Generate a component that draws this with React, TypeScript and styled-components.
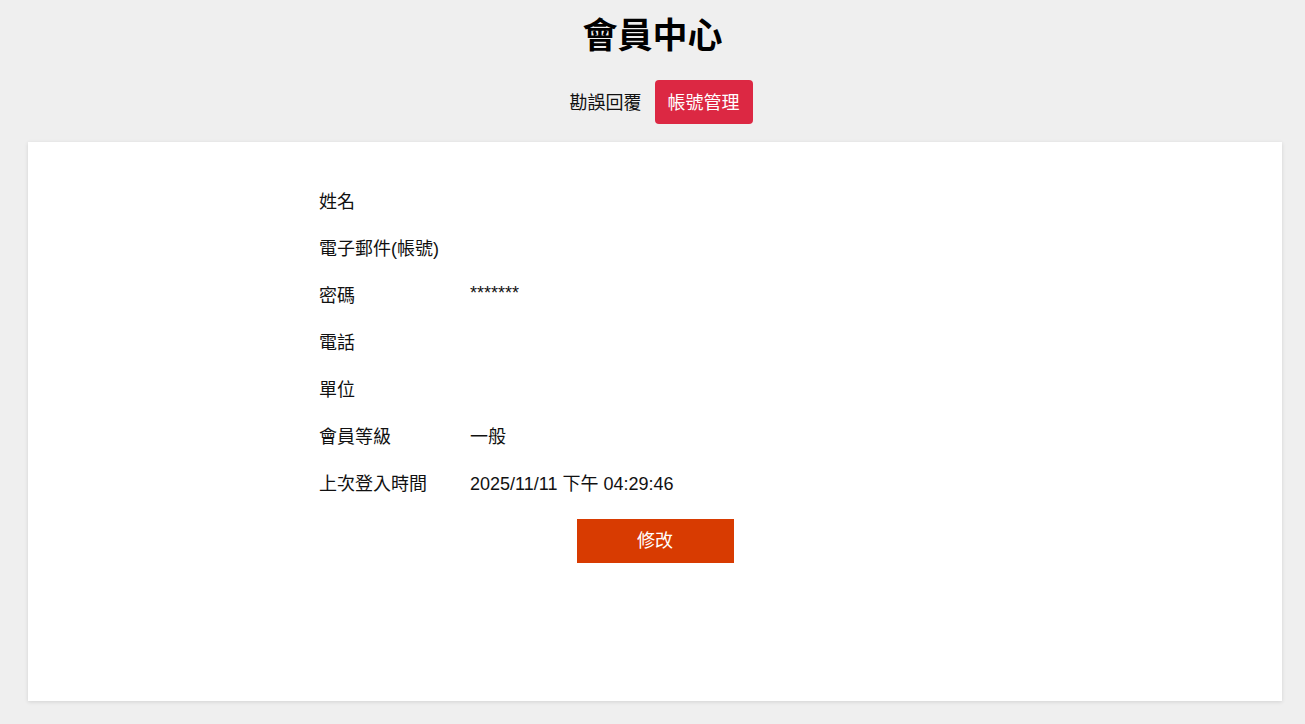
import React from 'react';
import styled, { createGlobalStyle } from 'styled-components';

const GlobalStyle = createGlobalStyle`
  html, body {
    margin: 0;
    padding: 0;
    background: #efefef;
    font-family: "Liberation Sans", Arial, "Noto Sans CJK TC", sans-serif;
    color: #111;
  }
`;

const Page = styled.div`
  display: flex;
  flex-direction: column;
  align-items: center;
  min-height: 724px;
`;

const Title = styled.h1`
  margin: 14px 0 0;
  font-size: 35px;
  line-height: 44px;
  font-weight: 700;
  color: #000;
`;

const Nav = styled.nav`
  display: flex;
  align-items: center;
  margin: 22px 0 0 4px;
`;

const NavItem = styled.button<{ active?: boolean }>`
  height: 44px;
  padding: 0 13px 2px;
  border: none;
  border-radius: 4px;
  font-family: inherit;
  font-size: 18px;
  cursor: pointer;
  background: ${p => (p.active ? '#dc2843' : 'transparent')};
  color: ${p => (p.active ? '#fff' : '#111')};
`;

const Card = styled.section`
  box-sizing: border-box;
  align-self: stretch;
  margin: 18px 23px 0 28px;
  min-height: 559px;
  background: #fff;
  box-shadow: 0 1px 4px rgba(0, 0, 0, 0.12);
  padding-top: 34px;
  display: flex;
  flex-direction: column;
  align-items: center;
`;

const InfoTable = styled.table`
  width: 672px;
  border-collapse: collapse;
  font-size: 18px;
`;

const Row = styled.tr`
  height: 47px;
`;

const Label = styled.td`
  width: 151px;
  padding: 0;
  vertical-align: middle;
`;

const Value = styled.td`
  padding: 0;
  vertical-align: middle;
`;

const EditButton = styled.button`
  margin-top: 14px;
  width: 157px;
  height: 44px;
  padding: 0 0 4px;
  border: none;
  background: #d83b01;
  color: #fff;
  font-family: inherit;
  font-size: 18px;
  cursor: pointer;
`;

const fields: [string, string][] = [
  ['姓名', ''],
  ['電子郵件(帳號)', ''],
  ['密碼', '*******'],
  ['電話', ''],
  ['單位', ''],
  ['會員等級', '一般'],
  ['上次登入時間', '2025/11/11 下午 04:29:46'],
];

const App: React.FC = () => {
  return (
    <Page>
      <GlobalStyle />
      <Title>會員中心</Title>
      <Nav>
        <NavItem>勘誤回覆</NavItem>
        <NavItem active>帳號管理</NavItem>
      </Nav>
      <Card>
        <InfoTable>
          <tbody>
            {fields.map(([label, value]) => (
              <Row key={label}>
                <Label>{label}</Label>
                <Value>{value}</Value>
              </Row>
            ))}
          </tbody>
        </InfoTable>
        <EditButton>修改</EditButton>
      </Card>
    </Page>
  );
};

export default App;
